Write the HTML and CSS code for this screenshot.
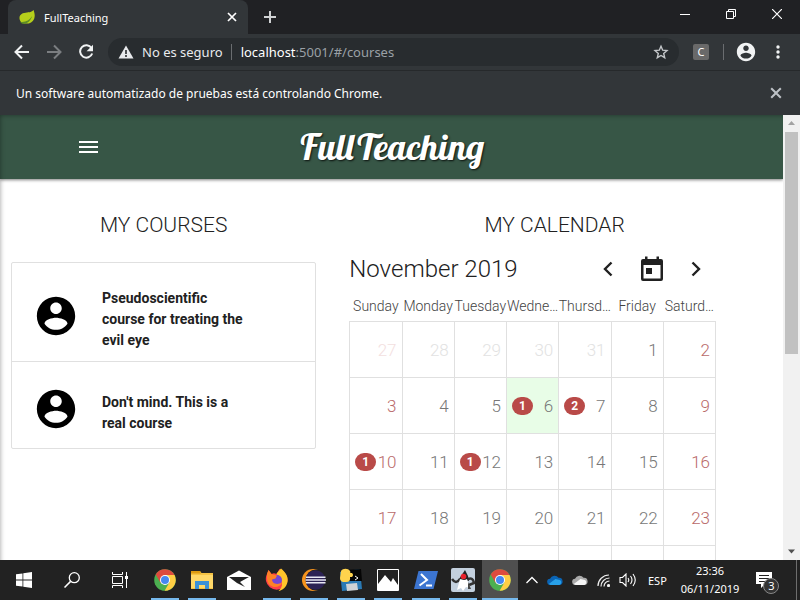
FILE: index.html
```html
<!DOCTYPE html>
<html lang="es">
<head>
<meta charset="utf-8">
<title>FullTeaching</title>
<link rel="stylesheet" href="styles.css">
</head>
<body>
<svg class="defs" aria-hidden="true">
  <symbol id="account" viewBox="0 0 24 24"><path d="M12 2C6.48 2 2 6.48 2 12s4.48 10 10 10 10-4.480 10-10S17.520 2 12 2zm0 3c1.660 0 3 1.340 3 3s-1.340 3-3 3-3-1.340-3-3 1.340-3 3-3zm0 14.200c-2.500 0-4.710-1.280-6-3.220.03-1.990 4-3.080 6-3.080 1.990 0 5.970 1.090 6 3.080-1.290 1.940-3.500 3.220-6 3.220z"/></symbol>
  <symbol id="close" viewBox="0 0 10 10"><path d="M1 1l8 8M9 1l-8 8" fill="none" stroke="currentColor" stroke-width="1.700"/></symbol>
  <symbol id="chrome" viewBox="0 0 22 22">
    <circle cx="11" cy="11" r="10.800" fill="#4caf50"/>
    <path d="M11 11L1.700 5.600A10.800 10.800 0 0 1 20.500 6z" fill="#dd4b3e"/>
    <path d="M11 6h9.500A10.800 10.800 0 0 1 10.600 21.800L15.400 13.500z" fill="#ffce44"/>
    <path d="M1.700 5.600L6.500 13.700 11 11V6z" fill="#dd4b3e"/>
    <circle cx="11" cy="11" r="5" fill="#fff"/><circle cx="11" cy="11" r="4" fill="#4688f1"/>
  </symbol>
  <symbol id="cloud" viewBox="0 0 18 12"><path d="M4 11.500a3.500 3.500 0 0 1-.6-7A5.500 5.500 0 0 1 13 3.500a4 4 0 0 1 1 8z" fill="var(--back)"/><path d="M2 10.500L9.500 5l5 1a3 3 0 0 1-.5 5.500H4z" fill="var(--front)"/></symbol>
</svg>

<header class="tabstrip">
  <div class="tab">
    <svg class="leaf" viewBox="0 0 18 16"><path d="M15.500.5C16 3 17.500 6 16 10c-2 5-8 6-13 4C-.5 11-.5 6 4 4c4-1.500 8 0 11.500-3.500z" fill="#b5cf1b"/><path d="M1 13c5 1 10-1 13-6-2 6-6 9-11 8z" fill="#5d8c26"/></svg>
    <span class="tab-title">FullTeaching</span>
    <button class="icon-btn tab-close" aria-label="Cerrar pestaña"><svg width="10" height="10"><use href="#close"/></svg></button>
  </div>
  <button class="icon-btn new-tab" aria-label="Nueva pestaña"><svg width="12" height="12" viewBox="0 0 12 12"><path d="M6 0v12M0 6h12" stroke="#d0d2d4" stroke-width="2"/></svg></button>
  <div class="window-buttons">
    <button class="icon-btn" aria-label="Minimizar"><svg width="10" height="10" viewBox="0 0 10 10"><path d="M0 5.500h10" stroke="#fff"/></svg></button>
    <button class="icon-btn" aria-label="Restaurar"><svg width="10" height="10" viewBox="0 0 10 10"><path d="M.5 2.500h7v7h-7zM2.500 2.500v-2h7v7h-2" fill="none" stroke="#fff"/></svg></button>
    <button class="icon-btn" aria-label="Cerrar"><svg width="10" height="10" viewBox="0 0 10 10"><path d="M0 0l10 10M10 0L0 10" stroke="#fff" stroke-width="1.200"/></svg></button>
  </div>
</header>

<nav class="toolbar">
  <button class="icon-btn" aria-label="Atrás"><svg width="16" height="16" viewBox="0 0 16 16"><path d="M15 8H2M8 1.500L1.500 8 8 14.500" fill="none" stroke="#f1f3f4" stroke-width="2"/></svg></button>
  <button class="icon-btn" aria-label="Adelante"><svg width="16" height="16" viewBox="0 0 16 16"><path d="M1 8h13M8 1.500L14.500 8 8 14.500" fill="none" stroke="#7b7e81" stroke-width="2"/></svg></button>
  <button class="icon-btn" aria-label="Recargar"><svg width="16" height="16" viewBox="0 0 16 16"><path d="M13.500 4A6.200 6.200 0 1 0 14.200 9.500" fill="none" stroke="#f1f3f4" stroke-width="2"/><path d="M15 .8v6.400H8.600z" fill="#f1f3f4"/></svg></button>
  <div class="omnibox">
    <svg width="16" height="14" viewBox="0 0 16 14"><path d="M8 .5L15.500 13.500H.5z" fill="#e8eaed"/><path d="M8 5v4M8 10v2" stroke="#282c2f" stroke-width="1.600"/></svg>
    <span class="security">No es seguro</span>
    <span class="url"><b>localhost</b>:5001/#/courses</span>
    <button class="icon-btn star" aria-label="Marcador"><svg width="16" height="16" viewBox="0 0 16 16"><path d="M8 2.200l1.700 4 4.300.4-3.300 2.900 1 4.200L8 11.500l-3.700 2.200 1-4.200L2 6.600l4.300-.4z" fill="none" stroke="#c4c7ca" stroke-width="1.400"/></svg></button>
  </div>
  <button class="extension" aria-label="Extensión C">C</button>
  <span class="separator"></span>
  <button class="icon-btn profile" aria-label="Perfil"><svg width="22" height="22" fill="#f1f3f4"><use href="#account"/></svg></button>
  <button class="icon-btn dots" aria-label="Menú"><svg width="4" height="14" viewBox="0 0 4 14" fill="#f1f3f4"><circle cx="2" cy="2" r="1.700"/><circle cx="2" cy="7" r="1.700"/><circle cx="2" cy="12" r="1.700"/></svg></button>
</nav>

<div class="infobar">
  <span>Un software automatizado de pruebas está controlando Chrome.</span>
  <button class="icon-btn" aria-label="Cerrar aviso"><svg width="12" height="12"><use href="#close"/></svg></button>
</div>

<div class="viewport">
  <div class="page">
    <header class="navbar">
      <button class="icon-btn menu" aria-label="Menú lateral"><svg width="20" height="12" viewBox="0 0 20 12"><path d="M0 1h19M0 6h19M0 11h19" stroke="#fff" stroke-width="2"/></svg></button>
      <a class="brand" href="#/">FullTeaching</a>
    </header>
    <main class="dashboard">
      <section class="courses">
        <h1>MY COURSES</h1>
        <ul class="course-list">
          <li><svg class="avatar"><use href="#account"/></svg><a href="#/courses/1">Pseudoscientific course for treating the evil eye</a></li>
          <li><svg class="avatar"><use href="#account"/></svg><a href="#/courses/2">Don't mind. This is a real course</a></li>
        </ul>
      </section>
      <section class="calendar">
        <h1>MY CALENDAR</h1>
        <div class="calendar-body">
          <div class="calendar-head">
            <h2>November 2019</h2>
            <div class="calendar-nav">
              <button class="icon-btn" aria-label="Mes anterior"><svg width="10" height="16" viewBox="0 0 10 16"><path d="M8.500 1.500L2 8l6.500 6.500" fill="none" stroke="#212121" stroke-width="2.400"/></svg></button>
              <button class="icon-btn" aria-label="Hoy"><svg width="24" height="26" viewBox="0 0 24 26"><path d="M3 3h18a2 2 0 0 1 2 2v18a2 2 0 0 1-2 2H3a2 2 0 0 1-2-2V5a2 2 0 0 1 2-2zM3.500 9v13.500h17V9z" fill="#212121" fill-rule="evenodd"/><path d="M5 .5h2.500V4H5zM16.500.5H19V4h-2.500zM6 12h6v6H6z" fill="#212121"/></svg></button>
              <button class="icon-btn" aria-label="Mes siguiente"><svg width="10" height="16" viewBox="0 0 10 16"><path d="M1.500 1.500L8 8l-6.500 6.500" fill="none" stroke="#212121" stroke-width="2.400"/></svg></button>
            </div>
          </div>
          <table>
            <thead><tr><th>Sunday</th><th>Monday</th><th>Tuesday</th><th>Wedne…</th><th>Thursd…</th><th>Friday</th><th>Saturd…</th></tr></thead>
            <tbody>
              <tr class="faded"><td class="weekend">27</td><td>28</td><td>29</td><td>30</td><td>31</td><td class="current">1</td><td class="current weekend">2</td></tr>
              <tr><td class="weekend">3</td><td>4</td><td>5</td><td class="today"><span class="badge">1</span>6</td><td><span class="badge">2</span>7</td><td>8</td><td class="weekend">9</td></tr>
              <tr><td class="weekend"><span class="badge">1</span>10</td><td>11</td><td><span class="badge">1</span>12</td><td>13</td><td>14</td><td>15</td><td class="weekend">16</td></tr>
              <tr><td class="weekend">17</td><td>18</td><td>19</td><td>20</td><td>21</td><td>22</td><td class="weekend">23</td></tr>
              <tr><td></td><td></td><td></td><td></td><td></td><td></td><td></td></tr>
            </tbody>
          </table>
        </div>
      </section>
    </main>
  </div>
  <div class="scrollbar">
    <svg width="17" height="17" viewBox="0 0 17 17"><path d="M5 10l3.500-4 3.500 4z" fill="#a3a3a3"/></svg>
    <div class="track"><div class="thumb"></div></div>
    <svg width="17" height="17" viewBox="0 0 17 17"><path d="M5 6.500h7l-3.500 4z" fill="#505050"/></svg>
  </div>
</div>

<footer class="taskbar">
  <div class="system">
    <button class="icon-btn" aria-label="Inicio"><svg width="16" height="16" viewBox="0 0 16 16" fill="#fff"><path d="M0 2.300L6.500 1.400V7.500H0zM7.300 1.300L16 0v7.500H7.300zM0 8.400h6.500v6.200L0 13.700zM7.300 8.400H16V16l-8.700-1.300z"/></svg></button>
    <button class="icon-btn" aria-label="Buscar"><svg width="16" height="16" viewBox="0 0 16 16"><circle cx="10.300" cy="5.700" r="5" fill="none" stroke="#fff" stroke-width="1.300"/><path d="M6.600 9.400L.5 15.500" stroke="#fff" stroke-width="1.500"/></svg></button>
    <button class="icon-btn" aria-label="Vista de tareas"><svg width="16" height="16" viewBox="0 0 16 16"><path d="M.5 0v2.500h10V0M.5 16v-2.500h10V16M.5 4.500h10v7H.5zM14.500 0v16" fill="none" stroke="#fff"/><path d="M13 4h3v3h-3z" fill="#fff"/></svg></button>
  </div>
  <div class="apps">
    <button class="app open" aria-label="Chrome"><svg width="22" height="22"><use href="#chrome"/></svg></button>
    <button class="app open" aria-label="Explorador"><svg width="22" height="20" viewBox="0 0 22 20"><path d="M0 1h9l1.500 2H22v16H0z" fill="#f5c344"/><path d="M0 1h9l1 2.500H0z" fill="#dd9b12"/><path d="M0 5h22v13H0z" fill="#ffd869"/><path d="M4 19v-8h14v8h-4v-4H8v4z" fill="#3a91d8"/></svg></button>
    <button class="app" aria-label="Correo"><svg width="24" height="20" viewBox="0 0 24 20"><path d="M0 7l12-6.500L24 7v13H0z" fill="#fff"/><path d="M2 7h20l-9 5 5 5-8-4z" fill="#222"/></svg></button>
    <button class="app open" aria-label="Firefox"><svg width="24" height="24" viewBox="0 0 24 24"><path d="M2 6l1.500-4 3 4c2-1 3-1 5 0l3-5c5 2 8.500 7 8 12A11 11 0 0 1 1 13C.5 10 1 8 2 6z" fill="#ff3d4a"/><path d="M12 5l4-4.500C20 4 23.500 8 22.500 14c-1 5-5 8.500-9 9 5-4 5-11-2-17z" fill="#ffc52b"/><circle cx="12" cy="12" r="5" fill="#7646d2"/><path d="M2 6l1.500-4 3 4 5.500 1.500-1.500 3-3.500 1c0 4 5 6 10 3-2 7-15 6-15-4z" fill="#ff8126"/></svg></button>
    <button class="app open" aria-label="Eclipse"><svg width="24" height="22" viewBox="0 0 24 22"><circle cx="11" cy="11" r="11" fill="#f7941e"/><circle cx="14" cy="11" r="10.500" fill="#222"/><circle cx="13.500" cy="11" r="9.800" fill="#2c2255"/><path d="M4 8.300h19.500M3.500 11h20.500M4 13.700h19.500" stroke="#e8e8f4" stroke-width="1.600"/></svg></button>
    <button class="app open" aria-label="WinSCP"><svg width="24" height="24" viewBox="0 0 24 24"><path d="M1 4l20-3 2 20-20 2z" fill="#2a7ab5"/><path d="M6 2l16-1 1 12H8z" fill="#050505"/><path d="M7 16l11-1 1 7-11 1z" fill="#cfd3d6"/><path d="M2 3c2-3 7-3 9 0q1 1.500 0 2h2q2 2 0 4h-2q1 5-4 5H4q-3-1-3-4z" fill="#ffd34d"/><path d="M16 8l3 2-3 2" fill="none" stroke="#fff"/></svg></button>
    <button class="app open" aria-label="Fotos"><svg width="22" height="22" viewBox="0 0 22 22"><path d="M.5.500h21v21H.5z" fill="#222" stroke="#fff"/><path d="M1 15l7-9 6 7 2-4 5 7v5H1z" fill="#fff"/></svg></button>
    <button class="app open" aria-label="PowerShell"><svg width="24" height="18" viewBox="0 0 24 18"><path d="M4.500 0H24l-4.500 18H0z" fill="#3c75d1"/><path d="M7 3l6 6-7.500 5.500M12 14.500h6" fill="none" stroke="#fff" stroke-width="2"/></svg></button>
    <button class="app open" aria-label="Java"><svg width="24" height="24" viewBox="0 0 24 24"><rect width="24" height="24" rx="2" fill="#c3d0de"/><path d="M1 11q4 6 8 0M17 11q5-2 6 4l-5 2" fill="none" stroke="#333" stroke-width="2.500"/><path d="M8 11l6-9 3 6 1 5z" fill="#222"/><path d="M9 11q4 2 7 0l3 9-4-1-3 4-2-3-4 2z" fill="#fff"/><path d="M17 14l3 7h-3z" fill="#444"/><circle cx="12.500" cy="8.500" r="2.800" fill="#e8212b"/></svg></button>
    <button class="app open active" aria-label="Chrome activo"><svg width="22" height="22"><use href="#chrome"/></svg></button>
  </div>
  <div class="tray">
    <svg width="12" height="8" viewBox="0 0 12 8"><path d="M.5 7L6 1.500 11.500 7" fill="none" stroke="#fff" stroke-width="1.300"/></svg>
    <svg class="cloud-blue" width="16" height="12"><use href="#cloud"/></svg>
    <svg class="cloud-gray" width="16" height="12"><use href="#cloud"/></svg>
    <svg width="13" height="13" viewBox="0 0 13 13" fill="none" stroke="#eee" stroke-width="1.200"><path d="M1 12A11 11 0 0 1 12 1M4 12.500A8.500 8.500 0 0 1 12.500 4M7 12.500A6 6 0 0 1 12.500 7"/><circle cx="11.500" cy="11.500" r="1" fill="#fff"/></svg>
    <svg width="18" height="14" viewBox="0 0 18 14" fill="none" stroke="#fff" stroke-width="1.100"><path d="M1 4.500h2.500L7 1v12L3.500 9.500H1zM9 5q1.500 2 0 4M11.500 3q3 4 0 8M14 1q4.500 6 0 12"/></svg>
    <span class="lang">ESP</span>
    <time class="clock" datetime="2019-11-06T23:36"><span>23:36</span><span>06/11/2019</span></time>
    <button class="icon-btn notes" aria-label="Notificaciones"><svg width="16" height="16" viewBox="0 0 16 16"><path d="M0 0h16v12H9l-4 4v-4H0z" fill="#fff"/><path d="M3 3.500h10M3 6.500h10M3 9.500h6" stroke="#222"/></svg><span class="count">3</span></button>
  </div>
</footer>
</body>
</html>
```

FILE: styles.css
```css
* { box-sizing: border-box; }

body {
  margin: 0;
  height: 100vh;
  display: flex;
  flex-direction: column;
  overflow: hidden;
  background: #fff;
  font-family: "Noto Sans", "Open Sans", sans-serif;
  font-size: 12px;
  color: #fff;
}

button { font: inherit; color: inherit; }
svg { display: block; flex: none; }
.defs { position: absolute; width: 0; height: 0; }

.icon-btn {
  display: flex;
  align-items: center;
  justify-content: center;
  padding: 0;
  border: 0;
  background: none;
}

/* Browser chrome */
.tabstrip {
  flex: none;
  display: flex;
  height: 34px;
  padding-left: 8px;
  background: #202124;
}
.tab {
  display: flex;
  align-items: center;
  width: 240px;
  padding: 0 11px;
  gap: 8px;
  border-radius: 8px 8px 0 0;
  background: #323639;
}
.leaf { width: 17px; height: 16px; }
.tab-title { flex: 1; font-size: 11px; }
.tab-close { width: 10px; }
.new-tab { width: 44px; }
.window-buttons { display: flex; margin-left: auto; height: 28px; }
.window-buttons .icon-btn { width: 46px; }

.toolbar {
  flex: none;
  display: flex;
  align-items: center;
  height: 37px;
  padding-left: 6px;
  background: #323639;
  border-bottom: 1px solid #26292b;
}
.toolbar > .icon-btn { width: 32px; }
.omnibox {
  flex: 1;
  display: flex;
  align-items: center;
  height: 28px;
  margin-left: 6px;
  padding: 0 10px;
  border-radius: 14px;
  background: #282c2f;
  font-size: 13px;
}
.security {
  margin-left: 8px;
  padding-right: 8px;
  border-right: 1px solid #6a6d70;
  line-height: 16px;
  color: #e8eaed;
}
.url { flex: 1; margin-left: 9px; color: #9aa0a6; }
.url b { font-weight: 400; color: #fff; }
.extension {
  width: 16px;
  height: 16px;
  margin-left: 14px;
  padding: 0;
  border: 0;
  border-radius: 2px;
  background: #696969;
  font-size: 11px;
  line-height: 16px;
}
.separator { width: 1px; height: 16px; margin-left: 14px; background: #6a6d70; }
.toolbar > .profile { width: 44px; }
.toolbar > .dots { width: 20px; margin-right: 12px; }

.infobar {
  flex: none;
  display: flex;
  align-items: center;
  justify-content: space-between;
  height: 44px;
  padding: 0 18px 0 16px;
  background: #323639;
}
.infobar .icon-btn { color: #bdc1c6; }

/* Web page */
.viewport {
  position: relative;
  flex: 1;
  min-height: 0;
  display: flex;
  overflow: hidden;
}
.page {
  position: relative;
  flex: 1;
  overflow: hidden;
  font-family: Roboto, sans-serif;
  color: #212121;
}
.page::after {
  content: "";
  position: absolute;
  inset: 0 -8px -8px 0;
  box-shadow: inset 0 0 5px rgba(0, 0, 0, 0.4);
  pointer-events: none;
}
.navbar {
  display: grid;
  grid-template-columns: 1fr auto 1fr;
  align-items: center;
  height: 64px;
  background: #375646;
  box-shadow: 0 1px 3px rgba(0, 0, 0, 0.5);
}
.menu { justify-self: start; margin-left: 79px; }
.brand {
  grid-column: 2;
  font: italic 700 36px/40px "Lobster Two", "Liberation Serif", serif;
  color: #fff;
  text-decoration: none;
  text-shadow: 1px 1px 2px rgba(0, 0, 0, 0.8);
}

.dashboard { display: grid; grid-template-columns: 5fr 7fr; }
h1 {
  margin: 0;
  padding-top: 32px;
  font-size: 21px;
  line-height: 28px;
  font-weight: 300;
  text-align: center;
}
.courses { padding: 0 10px 0 11px; }
.course-list {
  margin: 23px 0 0;
  padding: 0;
  list-style: none;
  border: 1px solid #e0e0e0;
  border-radius: 2px;
}
.course-list li {
  display: flex;
  align-items: center;
  gap: 23px;
  padding: 25px 64px 10px 21px;
}
.course-list li + li { padding-bottom: 14px; padding-top: 30px; border-top: 1px solid #e0e0e0; }
.avatar { width: 46px; height: 46px; margin: -9px 0 -1px; fill: #000; }
.course-list a {
  font-size: 14px;
  line-height: 21px;
  font-weight: 700;
  color: #212121;
  text-decoration: none;
}

.calendar-body { margin: 0 67px 0 23px; }
.calendar-head {
  display: flex;
  align-items: center;
  justify-content: space-between;
  height: 60px;
}
h2 { margin: 0; font-size: 24px; line-height: 32px; font-weight: 300; }
.calendar-nav { display: flex; gap: 27px; padding-right: 15px; }

table {
  width: 100%;
  border-collapse: collapse;
  table-layout: fixed;
}
th {
  height: 22px;
  padding: 0 0 7px;
  white-space: nowrap;
  font-size: 14px;
  line-height: 15px;
  font-weight: 300;
  color: #424242;
}
td {
  height: 56px;
  padding: 0 5px;
  border: 1px solid #e0e0e0;
  text-align: right;
  font-size: 17px;
  line-height: 20px;
  font-weight: 300;
  color: #777;
}
.weekend { color: #b96a6a; }
.faded td:not(.current) { color: #e2e2e2; }
.faded .weekend:not(.current) { color: #f3e0e0; }
.today { background: #e8fde7; }
.badge {
  float: left;
  min-width: 20px;
  height: 18px;
  margin-top: 1px;
  padding: 0 7px;
  border-radius: 9px;
  background: #b94a48;
  color: #fff;
  font-size: 12px;
  line-height: 18px;
  font-weight: 700;
}

.scrollbar { flex: none; display: flex; flex-direction: column; width: 17px; background: #f1f1f1; }
.track { flex: 1; padding: 0 2px; }
.thumb { height: 54%; background: #c1c1c1; }

/* Desktop taskbar */
.taskbar { flex: none; display: flex; height: 40px; background: #222; }
.system { display: flex; }
.system .icon-btn { width: 48px; }
.apps { display: flex; flex: none; width: 374px; padding-left: 3px; justify-content: space-between; }
.app {
  position: relative;
  display: flex;
  align-items: center;
  justify-content: center;
  width: 36px;
  padding: 0;
  border: 0;
  background: none;
}
.open::after {
  content: "";
  position: absolute;
  inset: auto 4px 0;
  height: 2px;
  background: #76b9ed;
}
.active { background: #4f4f4f; }
.active::after { inset: auto 0 0; }
.tray {
  display: flex;
  flex: 1;
  align-items: center;
  gap: 9px;
  margin-right: 3px;
  padding-left: 8px;
  border-right: 1px solid #6e6e6e;
  font-size: 11px;
}
.cloud-blue { --back: #0a64b5; --front: #28a0e8; }
.cloud-gray { --back: #aaa; --front: #f5f5f5; }
.lang { margin: 0 5px 0 2px; }
.clock { display: flex; flex-direction: column; align-items: center; line-height: 18px; }
.notes { position: relative; margin-left: 8px; }
.count {
  position: absolute;
  left: 7px;
  top: 6px;
  width: 16px;
  height: 16px;
  border: 1px solid #888;
  border-radius: 50%;
  background: #333;
  line-height: 14px;
  text-align: center;
}
```
